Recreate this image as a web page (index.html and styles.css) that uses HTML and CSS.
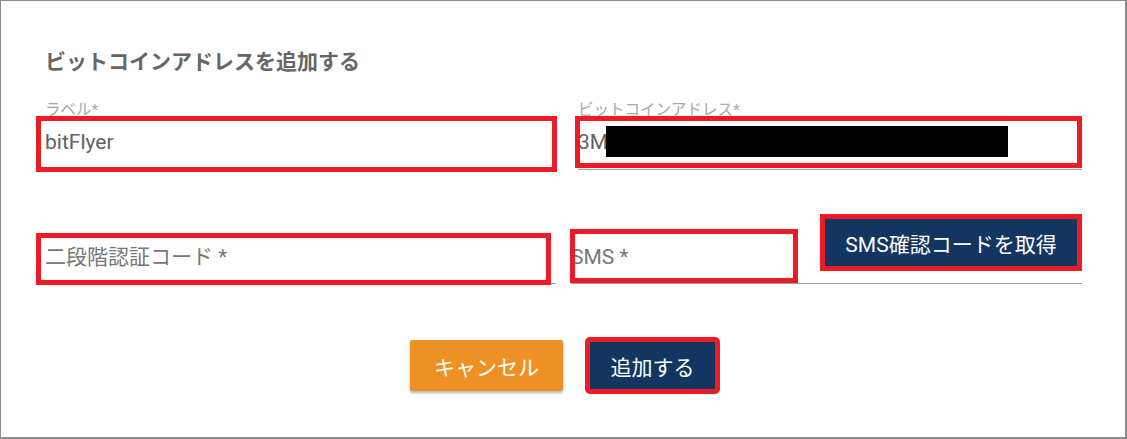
FILE: index.html
```html
<!DOCTYPE html>
<html lang="ja">
<head>
<meta charset="utf-8">
<title>ビットコインアドレスを追加する</title>
<link rel="stylesheet" href="styles.css">
</head>
<body>
<div class="dialog">
  <h2 class="title">ビットコインアドレスを追加する</h2>
  <div class="row row-top">
    <div class="field field-label">
      <div class="label">ラベル*</div>
      <div class="value">bitFlyer</div>
      <span class="mark mark-1"></span>
    </div>
    <div class="field field-address">
      <div class="label">ビットコインアドレス*</div>
      <div class="value">3M<span class="redact"></span></div>
      <span class="mark mark-2"></span>
    </div>
  </div>
  <div class="row row-bottom">
    <div class="field field-code">
      <div class="placeholder">二段階認証コード *</div>
      <span class="mark mark-3"></span>
    </div>
    <div class="field field-sms">
      <div class="placeholder">SMS *</div>
      <button class="btn btn-navy btn-sms">SMS確認コードを取得</button>
      <span class="mark mark-4"></span>
    </div>
  </div>
  <div class="actions">
    <button class="btn btn-orange btn-cancel">キャンセル</button>
    <button class="btn btn-navy btn-add">追加する</button>
  </div>
</div>
</body>
</html>
```
FILE: styles.css
```css
* {
  box-sizing: border-box;
}

html,
body {
  margin: 0;
  padding: 0;
  background: #ffffff;
}

body {
  font-family: Roboto, "Noto Sans CJK JP", sans-serif;
}

.dialog {
  width: 1127px;
  height: 439px;
  border: 1px solid #8c8c8c;
  border-right-width: 2px;
  border-bottom-width: 2px;
  padding: 44px 43px 0 44px;
  background: #ffffff;
}

.title {
  margin: 0;
  font-family: "Noto Sans CJK JP", sans-serif;
  font-size: 21px;
  line-height: 30px;
  font-weight: 700;
  color: #666666;
}

.row {
  display: flex;
}

.row-top {
  gap: 23px;
  margin-top: 26px;
}

.field {
  position: relative;
  border-bottom: 1px solid #a0a0a0;
}

.field-label {
  width: 510px;
}

.field-address {
  flex: 1;
}

.label {
  height: 18px;
  font-size: 15.5px;
  line-height: 18px;
  color: #a8a8a8;
  white-space: nowrap;
}

.value {
  position: relative;
  margin-top: 8px;
  height: 42px;
  padding-bottom: 12px;
  font-size: 21px;
  line-height: 30px;
  color: #616161;
}

.redact {
  position: absolute;
  left: 28px;
  top: -1px;
  width: 402px;
  height: 31px;
  background: #000000;
}

.row-bottom {
  gap: 15px;
  align-items: flex-end;
  margin-top: 49px;
}

.field-code {
  width: 511px;
}

.field-sms {
  flex: 1;
  display: flex;
  align-items: flex-end;
}

.placeholder {
  flex: 1;
  height: 41px;
  padding-bottom: 11px;
  font-size: 21px;
  line-height: 30px;
  color: #777777;
  white-space: nowrap;
}

.btn {
  border: none;
  margin: 0;
  padding: 0;
  font-family: Roboto, "Noto Sans CJK JP", sans-serif;
  font-size: 21px;
  color: #ffffff;
  cursor: pointer;
  box-shadow: 0 2px 3px rgba(0, 0, 0, 0.3);
  border-radius: 2px;
}

.btn-navy {
  background: #123661;
}

.btn-orange {
  background: #ee9124;
}

.btn-sms {
  flex: none;
  width: 252px;
  height: 47px;
  margin: 0 5px 17px 0;
  outline: 5px solid #ed1c24;
  outline-offset: 0;
  border-radius: 0;
}

.actions {
  display: flex;
  justify-content: center;
  gap: 25px;
  margin-top: 56px;
}

.btn-cancel {
  width: 153px;
  height: 51px;
}

.btn-add {
  width: 129px;
  height: 51px;
  outline: 5px solid #ed1c24;
  outline-offset: -2px;
}

.mark {
  position: absolute;
  border: 5px solid #ed1c24;
  pointer-events: none;
}

.mark-1 {
  left: -9px;
  top: 15px;
  width: 521px;
  height: 56px;
}

.mark-2 {
  left: -3px;
  top: 15px;
  width: 507px;
  height: 52px;
}

.mark-3 {
  left: -9px;
  top: -9px;
  width: 515px;
  height: 52px;
}

.mark-4 {
  left: -1px;
  top: 10px;
  width: 228px;
  height: 54px;
}
```
